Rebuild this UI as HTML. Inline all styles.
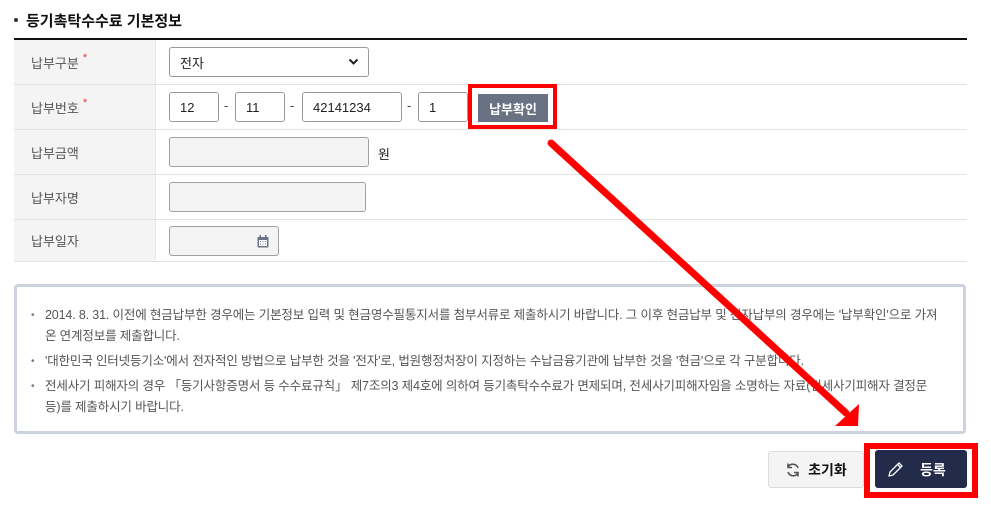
<!DOCTYPE html>
<html><head><meta charset="utf-8"><style>
*{box-sizing:border-box;margin:0;padding:0}
body{width:991px;height:511px;background:#fff;font-family:"Liberation Sans","Noto Sans CJK KR",sans-serif;position:relative;overflow:hidden;color:#333}
.abs{position:absolute}
.title{left:14px;top:10px;font-size:15px;font-weight:bold;color:#111}
.title:before{content:"";display:inline-block;width:4px;height:4px;background:#333;border-radius:50%;margin-right:8px;vertical-align:middle;position:relative;top:-2px}
.hline{left:14px;top:38px;width:953px;height:2px;background:#111}
.row{left:14px;width:953px;border-bottom:1px solid #e3e3e3}
.lab{position:absolute;left:0;top:0;bottom:0;width:142px;background:#f4f4f4;border-right:1px solid #e8e8e8;font-size:13px;color:#555;padding-left:17px;display:flex;align-items:center}
.lab i{color:#e33;font-style:normal;font-size:11px;margin-left:4px;position:relative;top:-4px}
.inp{position:absolute;border:1px solid #999;border-radius:3px;background:#fff;font-size:13px;color:#222;padding-left:10px;display:flex;align-items:center}
.dis{background:#f4f4f4;border-color:#a0a0a0}
.dash{position:absolute;font-size:13px;color:#444}
.note{left:14px;top:284px;width:952px;height:150px;border:3px solid #cdd3de;border-radius:4px}
.note p{position:absolute;left:16px;font-size:12.5px;color:#555;line-height:21px;white-space:nowrap;letter-spacing:-0.15px}
.note p:before{content:"•";position:absolute;left:-2px;color:#777;font-size:10px}
.note p span{margin-left:12px}
</style></head><body>
<div class="abs title">등기촉탁수수료 기본정보</div>
<div class="abs hline"></div>

<div class="abs row" style="top:40px;height:45px"><div class="lab">납부구분<i>*</i></div></div>
<div class="abs row" style="top:85px;height:45px"><div class="lab">납부번호<i>*</i></div></div>
<div class="abs row" style="top:130px;height:45px"><div class="lab">납부금액</div></div>
<div class="abs row" style="top:175px;height:45px"><div class="lab">납부자명</div></div>
<div class="abs row" style="top:220px;height:42px"><div class="lab">납부일자</div></div>

<div class="inp" style="left:169px;top:47px;width:200px;height:30px">전자
<svg style="position:absolute;right:9px;top:10px" width="11" height="8" viewBox="0 0 11 8"><path d="M1.5 1.5L5.5 5.5L9.5 1.5" stroke="#222" stroke-width="2" fill="none"/></svg></div>

<div class="inp" style="left:169px;top:92px;width:50px;height:30px">12</div>
<div class="dash" style="left:224px;top:98px">-</div>
<div class="inp" style="left:235px;top:92px;width:50px;height:30px">11</div>
<div class="dash" style="left:290px;top:98px">-</div>
<div class="inp" style="left:302px;top:92px;width:100px;height:30px">42141234</div>
<div class="dash" style="left:407px;top:98px">-</div>
<div class="inp" style="left:418px;top:92px;width:50px;height:30px">1</div>
<div class="abs" style="left:468px;top:84px;width:89px;height:45px;border:4px solid #f00"></div>
<div class="abs" style="left:477px;top:93px;width:72px;height:30px;background:#687283;color:#fff;font-size:13px;font-weight:bold;display:flex;align-items:center;justify-content:center;border:1px solid #fff">납부확인</div>

<div class="inp dis" style="left:169px;top:137px;width:200px;height:30px"></div>
<div class="dash" style="left:378px;top:144px;color:#222">원</div>
<div class="inp dis" style="left:169px;top:182px;width:197px;height:30px"></div>
<div class="inp dis" style="left:169px;top:226px;width:110px;height:30px">
<svg style="position:absolute;left:87px;top:8px" width="12" height="13" viewBox="0 0 12 13"><rect x="0.5" y="2" width="11" height="10.5" rx="1" fill="#6b7386"/><rect x="2" y="5" width="8" height="6" fill="#fff"/><rect x="2.5" y="0" width="1.5" height="3" fill="#6b7386"/><rect x="8" y="0" width="1.5" height="3" fill="#6b7386"/><g fill="#6b7386"><rect x="3" y="6" width="1" height="1"/><rect x="5.5" y="6" width="1" height="1"/><rect x="8" y="6" width="1" height="1"/><rect x="3" y="8.5" width="1" height="1"/><rect x="5.5" y="8.5" width="1" height="1"/><rect x="8" y="8.5" width="1" height="1"/></g></svg></div>

<div class="abs note">
<p style="top:18px"><span>2014. 8. 31. 이전에 현금납부한 경우에는 기본정보 입력 및 현금영수필통지서를 첨부서류로 제출하시기 바랍니다. 그 이후 현금납부 및 전자납부의 경우에는 '납부확인'으로 가져</span><br><span>온 연계정보를 제출합니다.</span></p>
<p style="top:64px"><span>'대한민국 인터넷등기소'에서 전자적인 방법으로 납부한 것을 '전자'로, 법원행정처장이 지정하는 수납금융기관에 납부한 것을 '현금'으로 각 구분합니다.</span></p>
<p style="top:89px"><span>전세사기 피해자의 경우 「등기사항증명서 등 수수료규칙」 제7조의3 제4호에 의하여 등기촉탁수수료가 면제되며, 전세사기피해자임을 소명하는 자료(전세사기피해자 결정문</span><br><span>등)를 제출하시기 바랍니다.</span></p>
</div>

<div class="abs" style="left:768px;top:451px;width:96px;height:37px;background:#f4f4f4;border:1px solid #ddd;border-radius:3px;display:flex;align-items:center;justify-content:center;font-size:14px;font-weight:bold;color:#111">
<svg width="16" height="16" viewBox="0 0 16 16" style="margin-right:7px"><path d="M13 6A5.5 5.5 0 0 0 3 5M3 10A5.5 5.5 0 0 0 13 11" stroke="#555" stroke-width="1.6" fill="none"/><path d="M3 1.5V5.5H7M13 14.5V10.5H9" stroke="#555" stroke-width="1.6" fill="none"/></svg>초기화</div>
<div class="abs" style="left:864px;top:443px;width:114px;height:55px;border:6px solid #f00"></div>
<div class="abs" style="left:875px;top:450px;width:92px;height:38px;background:#222b4a;border-radius:3px;color:#fff;font-size:14px;font-weight:bold">
<svg style="position:absolute;left:12px;top:11px" width="17" height="17" viewBox="0 0 17 17"><path d="M2 15L3 11L12 2L15 5L6 14Z M10.5 3.5L13.5 6.5" stroke="#fff" stroke-width="1.3" fill="none" stroke-linejoin="round"/></svg>
<span style="position:absolute;left:45px;top:10px">등록</span></div>

<svg class="abs" style="left:0;top:0" width="991" height="511"><path d="M551 143L846 413" stroke="#f00" stroke-width="7" stroke-linecap="round"/><path d="M859 404L858 426L835 426Z" fill="#f00"/></svg>
</body></html>
